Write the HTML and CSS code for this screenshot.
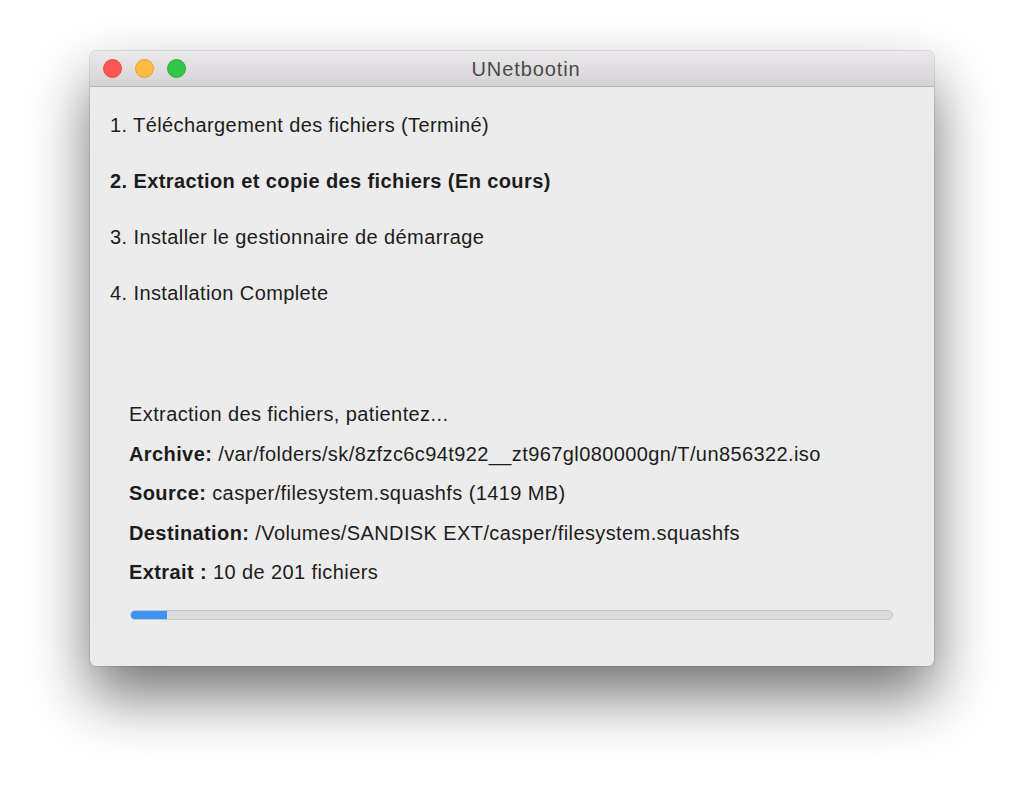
FILE: index.html
```html
<!DOCTYPE html>
<html>
<head>
<meta charset="utf-8">
<link rel="stylesheet" href="styles.css">
</head>
<body>
<div class="window">
  <div class="titlebar">
    <div class="lights">
      <span class="light red"></span>
      <span class="light yellow"></span>
      <span class="light green"></span>
    </div>
    <div class="title">UNetbootin</div>
  </div>
  <div class="content">
    <div class="steps">
      <div class="step">1. Téléchargement des fichiers (Terminé)</div>
      <div class="step current">2. Extraction et copie des fichiers (En cours)</div>
      <div class="step">3. Installer le gestionnaire de démarrage</div>
      <div class="step">4. Installation Complete</div>
    </div>
    <div class="details">
      <div class="line">Extraction des fichiers, patientez...</div>
      <div class="line"><b>Archive:</b> /var/folders/sk/8zfzc6c94t922__zt967gl080000gn/T/un856322.iso</div>
      <div class="line"><b>Source:</b> casper/filesystem.squashfs (1419 MB)</div>
      <div class="line"><b>Destination:</b> /Volumes/SANDISK EXT/casper/filesystem.squashfs</div>
      <div class="line"><b>Extrait :</b> 10 de 201 fichiers</div>
      <div class="progress"><div class="fill" style="width:4.7%"></div></div>
    </div>
  </div>
</div>
</body>
</html>
```

FILE: styles.css
```css
html, body {
  margin: 0;
  padding: 0;
  background: #ffffff;
}
body {
  width: 1024px;
  height: 795px;
  overflow: hidden;
  font-family: "Liberation Sans", Arial, sans-serif;
  color: #1c1c1c;
}
.window {
  margin: 51px 0 0 90px;
  width: 844px;
  height: 615px;
  background: #ececec;
  border-radius: 6px;
  box-shadow: 0 0 0 1px rgba(0,0,0,0.10), 0 30px 60px rgba(0,0,0,0.55);
  display: flex;
  flex-direction: column;
  overflow: hidden;
}
.titlebar {
  height: 35px;
  flex: none;
  background: linear-gradient(#ebe9eb, #d4d2d4);
  border-bottom: 1px solid #b3b3b3;
  position: relative;
  display: flex;
  align-items: center;
  justify-content: center;
}
.lights {
  position: absolute;
  left: 13px;
  top: 8px;
  display: flex;
  gap: 13px;
}
.light {
  width: 19px;
  height: 19px;
  border-radius: 50%;
  box-sizing: border-box;
}
.red { background: #fc5753; border: 1px solid #e24b47; }
.yellow { background: #fdbc40; border: 1px solid #e2a33a; }
.green { background: #33c748; border: 1px solid #2aae3a; }
.title {
  font-size: 20px;
  letter-spacing: 0.9px;
  color: #4a4a4a;
  margin-left: 28px;
  padding-top: 2px;
}
.content {
  padding: 27px 20px 0 20px;
  font-size: 20px;
  letter-spacing: 0.4px;
}
.steps {
  display: flex;
  flex-direction: column;
  gap: 34px;
}
.step {
  line-height: 22px;
}
.current {
  font-weight: bold;
}
.details {
  margin-top: 99px;
  padding-left: 19px;
  display: flex;
  flex-direction: column;
  gap: 17.5px;
}
.line {
  line-height: 22px;
}
.progress {
  margin-top: 9px;
  margin-left: 1px;
  width: 763px;
  height: 10px;
  box-sizing: border-box;
  border: 1px solid #c6c6c6;
  border-radius: 5px;
  background: #dcdcdc;
  overflow: hidden;
}
.fill {
  height: 100%;
  background: #3c92f5;
}
```
